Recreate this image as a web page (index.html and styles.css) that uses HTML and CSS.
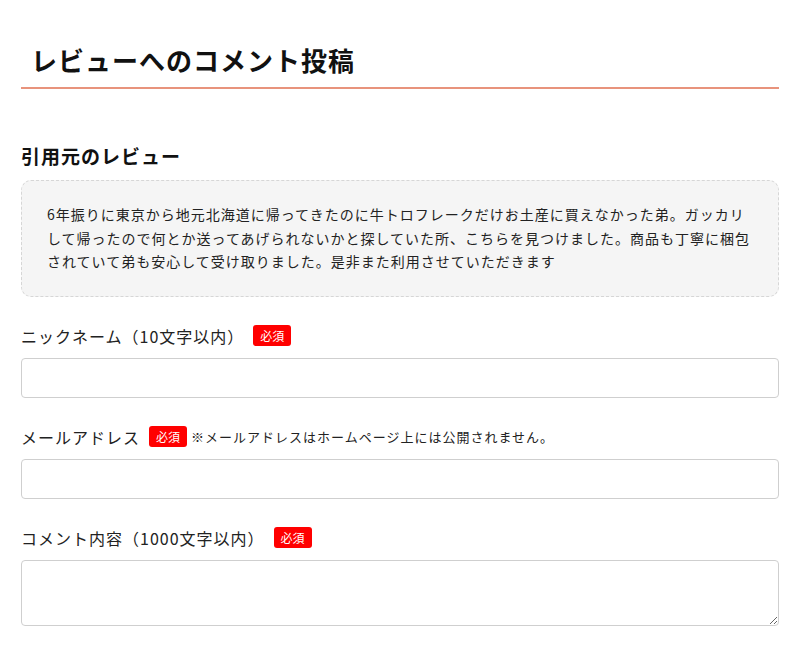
FILE: index.html
```html
<!DOCTYPE html>
<html lang="ja">
<head>
<meta charset="utf-8">
<title>レビューへのコメント投稿</title>
<link rel="stylesheet" href="styles.css">
</head>
<body>
<div class="page">
  <h1 class="page-title">レビューへのコメント投稿</h1>
  <section class="quote-section">
    <h2 class="section-title">引用元のレビュー</h2>
    <div class="quote-box">6年振りに東京から地元北海道に帰ってきたのに牛トロフレークだけお土産に買えなかった弟。ガッカリして帰ったので何とか送ってあげられないかと探していた所、こちらを見つけました。商品も丁寧に梱包されていて弟も安心して受け取りました。是非また利用させていただきます</div>
  </section>
  <form class="form">
    <div class="field">
      <div class="label-row"><label class="label" for="nick">ニックネーム（10文字以内）</label><span class="badge">必須</span></div>
      <input class="input" id="nick" type="text">
    </div>
    <div class="field">
      <div class="label-row"><label class="label" for="mail">メールアドレス</label><span class="badge">必須</span><span class="note">※メールアドレスはホームページ上には公開されません。</span></div>
      <input class="input" id="mail" type="email">
    </div>
    <div class="field">
      <div class="label-row"><label class="label" for="comment">コメント内容（1000文字以内）</label><span class="badge">必須</span></div>
      <textarea class="textarea" id="comment"></textarea>
    </div>
  </form>
</div>
</body>
</html>
```
FILE: styles.css
```css
* { box-sizing: border-box; }
html, body { margin: 0; padding: 0; background: #fff; }
body {
  font-family: "Noto Sans CJK JP", "Noto Sans", sans-serif;
  color: #222;
}
.page {
  padding: 40px 21px 0;
}
.page-title {
  margin: 0;
  padding: 0 0 8px 10px;
  font-size: 26px;
  line-height: 39px;
  letter-spacing: 1px;
  font-weight: 700;
  color: #111;
  border-bottom: 2px solid #e8937c;
}
.quote-section {
  margin-top: 53px;
}
.section-title {
  margin: 0 0 10px;
  font-size: 19px;
  line-height: 28px;
  letter-spacing: 1px;
  font-weight: 700;
  color: #111;
}
.quote-box {
  background: #f5f5f5;
  border: 1px dashed #d6d6d6;
  border-radius: 10px;
  padding: 22px 23px 22px 25px;
  font-size: 14px;
  line-height: 23.6px;
  letter-spacing: 1px;
  color: #222;
}
.form {
  margin-top: 27px;
  display: flex;
  flex-direction: column;
  gap: 27px;
}
.field {
  display: flex;
  flex-direction: column;
  gap: 10px;
}
.label-row {
  display: flex;
  align-items: center;
  height: 24px;
}
.label {
  font-size: 16px;
  line-height: 24px;
  letter-spacing: 1px;
  color: #222;
}
.badge {
  margin-left: 9px;
  background: #f00;
  color: #fff;
  font-size: 12px;
  line-height: 21px;
  height: 21px;
  padding: 0 7px;
  border-radius: 3px;
  letter-spacing: 0;
}
.note {
  margin-left: 4px;
  font-size: 13px;
  letter-spacing: 1px;
  color: #222;
}
.input, .textarea {
  display: block;
  width: 100%;
  border: 1px solid #cfcfcf;
  border-radius: 4px;
  background: #fff;
  font: inherit;
  margin: 0;
}
.input { height: 40px; }
.textarea { height: 66px; resize: both; }
```
